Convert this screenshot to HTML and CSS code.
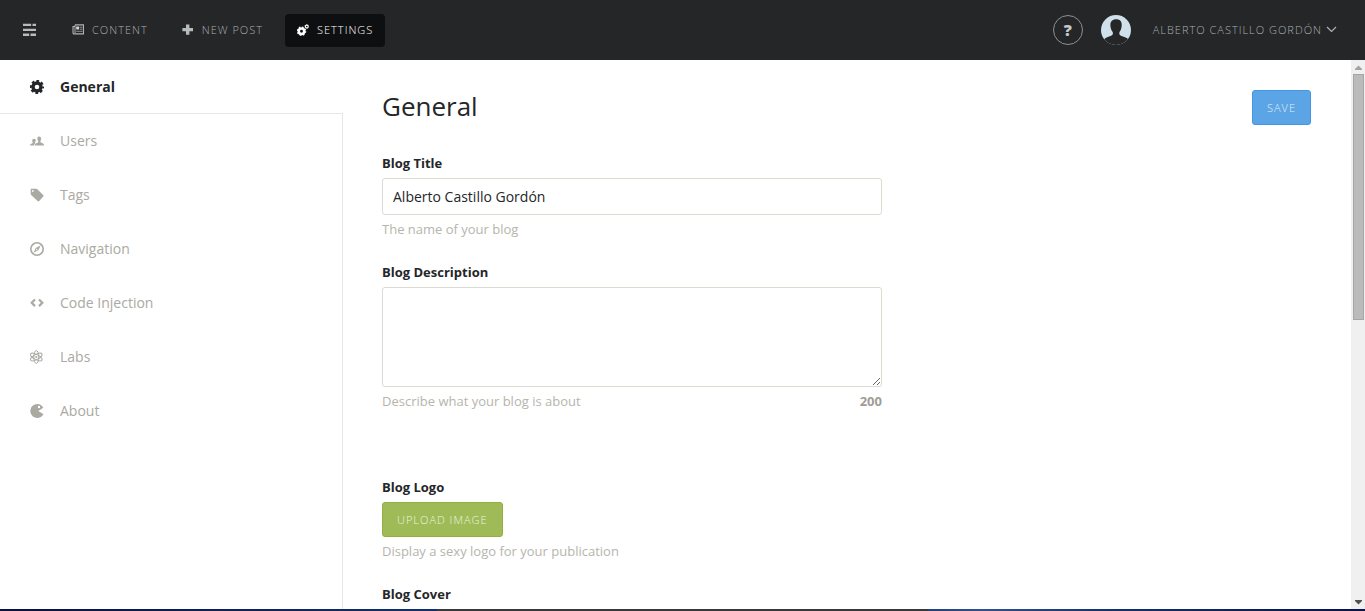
FILE: index.html
```html
<!DOCTYPE html>
<html lang="en">
<head>
<meta charset="utf-8">
<title>Settings - General</title>
<link rel="stylesheet" href="styles.css">
</head>
<body>
<div class="app">
  <header class="topbar">
    <a class="brand" href="#" aria-label="Home">
      <svg width="14" height="14" viewBox="0 0 14 14" fill="#b6bbbe"><path d="M1 .7h8.200V3H1zM10.500 .7H14V3h-3.500zM1 5.700h13V8H1zM1 10.500h6.200v2.400H1zM8.500 10.500H14v2.400H8.500z"/></svg>
    </a>
    <nav class="mainnav" aria-label="Main">
      <a class="mainnav-link" href="#">
        <svg width="12" height="12" viewBox="0 0 12 12"><path d="M3 .9h8.500v9H2.200c-.7 0-1.200-.5-1.200-1.200V2.500h2" fill="none" stroke="#b0b4b6" stroke-width="1.100"/><path d="M3 1v8" stroke="#b0b4b6"/><path d="M4.200 2.500h3v3h-3z" fill="#d4d8da"/><path d="M8 3.200h2.500M8 5.200h2.500M4.200 7.300h6.300" stroke="#8e9294"/></svg>
        Content
      </a>
      <a class="mainnav-link" href="#">
        <svg width="12" height="12" viewBox="0 0 12 12" fill="#b6bbbe"><path d="M4 .5h3.400v3.400H11v3.400H7.400v3.400H4V7.300H.4V3.900H4z"/></svg>
        New Post
      </a>
      <a class="mainnav-link is-active" href="#">
        <svg width="12" height="12" viewBox="0 0 12 12" fill="none" stroke="#fff"><circle cx="4.500" cy="7.200" r="2.700" stroke-width="2.500"/><circle cx="4.500" cy="7.200" r="4.100" stroke-width="1.300" stroke-dasharray="1.610 1.610"/><circle cx="9.800" cy="2.500" r="1.400" stroke-width="1.100"/><circle cx="9.800" cy="2.500" r="2.100" stroke-width=".6" stroke-dasharray=".825 .825"/></svg>
        Settings
      </a>
    </nav>
    <button class="help" type="button" aria-label="Help">?</button>
    <button class="account" type="button">
      <svg class="avatar" width="30" height="30" viewBox="0 0 30 30"><clipPath id="face"><circle cx="15" cy="15" r="15"/></clipPath><g clip-path="url(#face)"><path d="M0 0h30v30H0z" fill="#cfe0ea"/><path d="M15.300 4.300c4 0 5.700 2.500 5.400 6.200-.2 3-.9 5-2.200 6.500-.5 2 .1 3.200 2 4.100 3 1.200 5.500 1.700 7 3.400l3 5.500H0l3-5.500c1.500-1.700 3.500-2.200 6.500-3.400 2.200-.9 2.700-2.100 2.200-4.100-1.300-1.500-2.200-3.500-2.300-6.500-.2-3.700 1.700-6.200 5.900-6.200z" fill="#242628"/></g></svg>
      <span>Alberto Castillo Gordón</span>
      <svg class="chevron" width="11" height="8" viewBox="0 0 11 8" fill="none" stroke="#aeb3b5" stroke-width="1.200"><path d="M1 1l4.500 4.500L10 1"/></svg>
    </button>
  </header>

  <div class="workspace">
    <nav class="sidebar" aria-label="Settings">
      <a class="side-link is-current" href="#">
        <svg width="14" height="14" viewBox="0 0 14 14" fill="none" stroke="currentColor"><circle cx="7" cy="7" r="4" stroke-width="3.400"/><circle cx="7" cy="7" r="6.100" stroke-width="2" stroke-dasharray="2.700 2.091" stroke-dashoffset="1.350"/></svg>
        General
      </a>
      <a class="side-link" href="#">
        <svg width="14" height="14" viewBox="0 0 14 14" fill="currentColor"><path d="M9 2.500c1.500 0 2.300 1 2.100 2.600-.1 1-.4 1.600-.8 2.100 0 1 .3 1.200 1.300 1.600 1.500.6 2.400.9 2.400 2.700H5c0-1.800 1-2.100 2.300-2.700.9-.4 1.100-.7 1-1.600-.5-.5-.8-1.100-.9-2.100C7.200 3.500 7.700 2.500 9 2.500zM4.200 4.800c1 0 1.500.6 1.600 1.500 0 1-.3 1.700-.8 2.200 0 .4.100.6.500.8-.9.600-1.200 1.200-1.300 2.200H0c0-1.200.8-1.500 1.900-1.900.8-.3 1-.5.900-1-.5-.5-.6-1-.6-1.800 0-1.300.7-2 2-2z"/></svg>
        Users
      </a>
      <a class="side-link" href="#">
        <svg width="14" height="14" viewBox="0 0 14 14" fill="currentColor"><path fill-rule="evenodd" d="M1.200 .8H6c.5 0 .9.200 1.300.5l5.900 5.700c.5.500.5 1 0 1.500l-4 4.500c-.5.500-1.100.5-1.600 0L1.200 7C.9 6.600.7 6.300.7 5.800V1.300c0-.3.200-.5.500-.5zM2.800 2a.9.900 0 1 0 0 1.800.9.900 0 0 0 0-1.800z"/></svg>
        Tags
      </a>
      <a class="side-link" href="#">
        <svg width="14" height="14" viewBox="0 0 14 14"><circle cx="7" cy="7" r="6.200" fill="none" stroke="currentColor" stroke-width="1.600"/><path fill="currentColor" fill-rule="evenodd" d="M10.800 3.200L8.500 8 3.500 10.800 5.700 6zM6.500 6.500l-.9 2.100 2-1.200z"/></svg>
        Navigation
      </a>
      <a class="side-link" href="#">
        <svg width="14" height="14" viewBox="0 0 14 14" fill="none" stroke="currentColor" stroke-width="2.200"><path d="M5 3.500L1.700 6.800 5 10.100M9 3.500l3.300 3.300L9 10.100"/></svg>
        Code Injection
      </a>
      <a class="side-link" href="#">
        <svg width="14" height="14" viewBox="0 0 14 14" fill="none" stroke="currentColor"><g stroke-width="1"><ellipse cx="6.300" cy="7" rx="2.500" ry="6.400"/><ellipse cx="6.300" cy="7" rx="2.500" ry="6.400" transform="rotate(60 6.300 7)"/><ellipse cx="6.300" cy="7" rx="2.500" ry="6.400" transform="rotate(120 6.300 7)"/></g><circle cx="6.300" cy="7" r="1.100" fill="currentColor" stroke="none"/></svg>
        Labs
      </a>
      <a class="side-link" href="#">
        <svg width="14" height="14" viewBox="0 0 14 14" fill="currentColor"><path fill-rule="evenodd" d="M13.300 3.700L8.300 7l5.200 3.300A7 7 0 1 1 7.500 0c2.500 0 4.700 1.500 5.800 3.700zM9 1.800a1.200 1.200 0 1 0 0 2.400 1.200 1.200 0 0 0 0-2.400z"/></svg>
        About
      </a>
    </nav>

    <main class="content">
      <div class="content-head">
        <h1 class="title">General</h1>
        <button class="btn btn-blue" type="submit" form="general">Save</button>
      </div>
      <form class="form" id="general">
        <div class="group">
          <label class="label" for="blog-title">Blog Title</label>
          <input class="field" id="blog-title" type="text" value="Alberto Castillo Gordón">
          <p class="hint">The name of your blog</p>
        </div>
        <div class="group group-description">
          <label class="label" for="blog-description">Blog Description</label>
          <textarea class="field field-area" id="blog-description"></textarea>
          <p class="hint"><span>Describe what your blog is about</span><b class="count">200</b></p>
        </div>
        <div class="group">
          <label class="label" for="blog-logo">Blog Logo</label>
          <button class="btn btn-green" id="blog-logo" type="button">Upload Image</button>
          <p class="hint">Display a sexy logo for your publication</p>
        </div>
        <div class="group">
          <span class="label">Blog Cover</span>
        </div>
      </form>
    </main>

    <div class="scrollbar" aria-hidden="true">
      <svg width="14" height="14" viewBox="0 0 14 14" fill="#a3a3a3"><path d="M4 10V9l3.500-3.500L11 9v1z"/></svg>
      <div class="track"><div class="thumb"></div></div>
      <svg width="14" height="14" viewBox="0 0 14 14" fill="#505050"><path d="M4 5v1l3.500 3.500L11 6V5z"/></svg>
    </div>
  </div>
  <div class="desktop-edge"></div>
</div>
</body>
</html>
```
FILE: styles.css
```css
* {
  box-sizing: border-box;
}

body {
  margin: 0;
  background: #fff;
  color: #242628;
  font-family: "Open Sans", "Noto Sans", sans-serif;
  font-size: 14px;
  line-height: 20px;
}

a {
  color: inherit;
  text-decoration: none;
}

button,
input,
textarea {
  font: inherit;
}

svg {
  display: block;
  flex: none;
}

.app {
  display: flex;
  flex-direction: column;
  height: 100vh;
  overflow: hidden;
}

/* Top bar */

.topbar {
  display: flex;
  align-items: center;
  flex: none;
  height: 60px;
  padding: 0 28px 0 22px;
  background: #242628;
  color: #a9aeb1;
  font-size: 11px;
  font-weight: 300;
  letter-spacing: 1px;
  text-transform: uppercase;
}

.brand {
  margin-right: 24px;
  padding: 8px 0;
}

.mainnav {
  display: flex;
  gap: 10px;
  margin-right: auto;
}

.mainnav-link {
  display: flex;
  align-items: center;
  gap: 8px;
  height: 33px;
  padding: 0 12px;
  border-radius: 4px;
}

.mainnav-link.is-active {
  background: #0e0f10;
  color: #fff;
}

.help {
  width: 30px;
  height: 30px;
  margin-right: 18px;
  padding: 0;
  border: 1px solid #8d9294;
  border-radius: 50%;
  background: none;
  color: #c4c9cb;
  font-size: 16px;
  font-weight: 800;
  letter-spacing: 0;
}

.account {
  display: flex;
  align-items: center;
  padding: 0;
  border: 0;
  background: none;
  color: inherit;
  letter-spacing: inherit;
  text-transform: inherit;
}

.avatar {
  margin-right: 22px;
}

.chevron {
  margin-left: 4px;
}

/* Body */

.workspace {
  display: flex;
  flex: 1;
  min-height: 0;
}

.sidebar {
  display: flex;
  flex-direction: column;
  flex: 0 0 343px;
}

.sidebar::after {
  flex: 1;
  border-right: 1px solid #e8e8e2;
  content: "";
}

.side-link {
  display: flex;
  align-items: center;
  gap: 16px;
  height: 54px;
  padding-left: 30px;
  border-right: 1px solid #e8e8e2;
  color: #aaa9a2;
}

.side-link.is-current {
  border-right: 0;
  border-bottom: 1px solid #e8e8e2;
  color: #242628;
  font-weight: 700;
}

.content {
  flex: 1;
  min-width: 0;
  padding: 30px 40px 0 39px;
  overflow: hidden;
}

.content-head {
  display: flex;
  align-items: flex-start;
  justify-content: space-between;
  margin-bottom: 28px;
}

.title {
  margin: 0;
  font-size: 26px;
  font-weight: 400;
  line-height: 32px;
}

.form {
  max-width: 500px;
  font-size: 13px;
}

.group {
  margin-bottom: 23px;
}

.group-description {
  margin-bottom: 66px;
}

.label {
  display: block;
  margin-bottom: 5px;
  font-weight: 700;
}

.field {
  display: block;
  width: 100%;
  height: 37px;
  padding: 8px 10px;
  border: 1px solid #dbdbd2;
  border-radius: 3px;
  background: #fff;
  color: #242628;
  font-size: 14px;
}

.field-area {
  height: 100px;
  resize: vertical;
}

.hint {
  display: flex;
  justify-content: space-between;
  margin: 4px 0 0;
  color: #b6b5ac;
}

.count {
  color: #9e9d95;
}

.btn {
  display: block;
  height: 35px;
  padding: 0 14px;
  border: 1px solid;
  border-radius: 3px;
  font-size: 11px;
  font-weight: 300;
  letter-spacing: 1px;
  text-transform: uppercase;
}

.btn-blue {
  border-color: #4596e2;
  background: #5ba4e5;
  color: #e1effb;
}

.btn-green {
  border-color: #93af41;
  background: #9fbb58;
  color: #edf3df;
}

/* Scrollbar */

.scrollbar {
  display: flex;
  flex-direction: column;
  flex: 0 0 14px;
  background: #f0f0f0;
}

.track {
  flex: 1;
  padding: 0 1px 0 2px;
}

.thumb {
  height: 47.2%;
  border: 1px solid #a6a6a6;
  background: #bbb;
}

.desktop-edge {
  flex: none;
  height: 2px;
  background: linear-gradient(90deg, #0a1040 0, #14306a 32%, #38383a 32%, #38383a 68%, #24407a 68%, #34508c 72%, #14306a 82%, #0a1248 100%);
}
```
